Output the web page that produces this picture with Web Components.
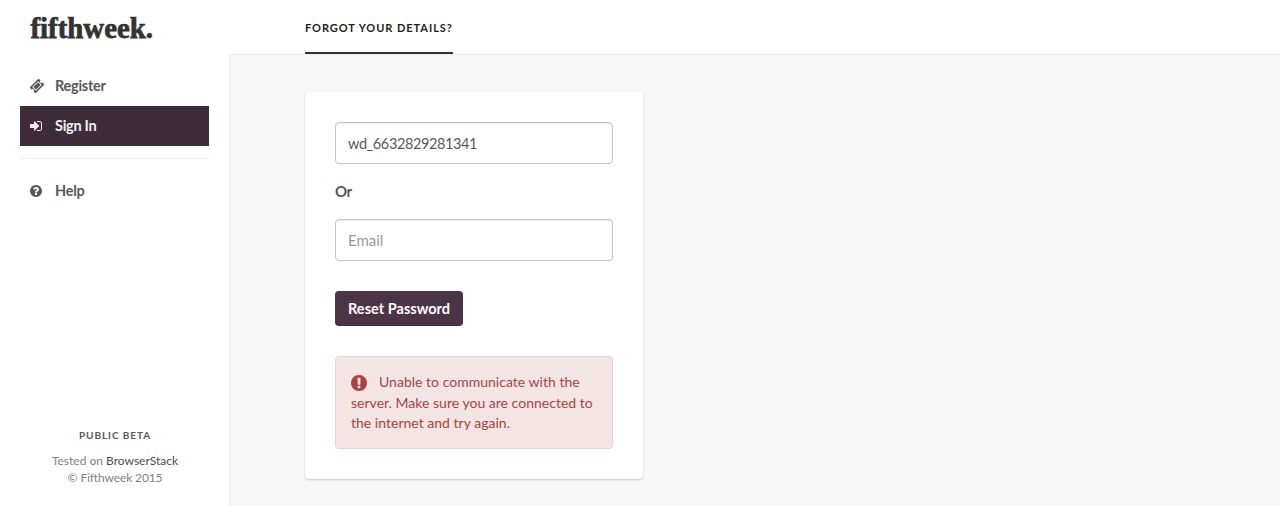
<!DOCTYPE html>
<html lang="en">
<head>
<meta charset="utf-8">
<title>Fifthweek</title>
<style>
html, body { margin: 0; height: 100%; }
body { font-family: Lato, sans-serif; font-size: 15px; line-height: 20px; color: #58595b; background: #fff; overflow: hidden; }
</style>
</head>
<body>
<fw-shell>
  <fw-sidebar slot="side">
    <fw-nav-item icon="ticket">Register</fw-nav-item>
    <fw-nav-item icon="sign-in" active>Sign In</fw-nav-item>
    <fw-divider></fw-divider>
    <fw-nav-item icon="question">Help</fw-nav-item>
  </fw-sidebar>
  <fw-tab slot="tabs">Forgot your details?</fw-tab>
  <fw-panel>
    <fw-field value="wd_6632829281341" label="Username"></fw-field>
    <fw-or>Or</fw-or>
    <fw-field placeholder="Email" label="Email"></fw-field>
    <fw-button>Reset Password</fw-button>
    <fw-alert>Unable to communicate with the server. Make sure you are connected to the internet and try again.</fw-alert>
  </fw-panel>
</fw-shell>
<script>
const ICONS = {
  'ticket': 'M1024 452l316 316-572 572-316-316zm-211 979l618-618q19-19 19-45t-19-45l-362-362q-18-18-45-18t-45 18l-618 618q-19 19-19 45t19 45l362 362q18 18 45 18t45-18zm889-637l-907 908q-37 37-90.5 37t-90.5-37l-126-126q56-56 56-136t-56-136-136-56-136 56l-125-126q-37-37-37-90.5t37-90.5l907-906q37-37 90.5-37t90.5 37l125 125q-56 56-56 136t56 136 136 56 136-56l126 125q37 37 37 90.5t-37 90.5z',
  'sign-in': 'M1312 896q0 26-19 45l-544 544q-19 19-45 19t-45-19-19-45v-288h-448q-26 0-45-19t-19-45v-384q0-26 19-45t45-19h448v-288q0-26 19-45t45-19 45 19l544 544q19 19 19 45zm352-352v704q0 119-84.5 203.5t-203.5 84.5h-320q-13 0-22.5-9.5t-9.5-22.5q0-4-1-20t-.5-26.5 3-23.5 10-19.5 20.5-6.5h320q66 0 113-47t47-113v-704q0-66-47-113t-113-47h-312l-11.5-1-11.5-3-8-5.5-7-9-2-13.5q0-4-1-20t-.5-26.5 3-23.5 10-19.5 20.5-6.5h320q119 0 203.5 84.5t84.5 203.5z',
  'question': 'M1024 1376v-192q0-14-9-23t-23-9h-192q-14 0-23 9t-9 23v192q0 14 9 23t23 9h192q14 0 23-9t9-23zm256-672q0-88-55.5-163t-138.5-116-170-41q-243 0-371 213-15 24 8 42l132 100q7 6 19 6 16 0 25-12 53-68 86-92 34-24 86-24 48 0 85.5 26t37.5 59q0 38-20 61t-68 45q-63 28-115.5 86.5t-52.5 125.5v36q0 14 9 23t23 9h192q14 0 23-9t9-23q0-19 21.5-49.5t54.5-49.5q32-18 49-28.5t46-35 44.5-48 28-60.5 12.5-81zm384 192q0 209-103 385.5t-279.5 279.5-385.5 103-385.5-103-279.5-279.5-103-385.5 103-385.5 279.5-279.5 385.5-103 385.5 103 279.5 279.5 103 385.5z',
  'exclamation': 'M896 128q209 0 385.5 103t279.5 279.5 103 385.5-103 385.5-279.5 279.5-385.5 103-385.5-103-279.5-279.5-103-385.5 103-385.5 279.5-279.5 385.5-103zm128 1247v-190q0-14-9-23.5t-22-9.5h-192q-13 0-23 10t-10 23v190q0 13 10 23t23 10h192q13 0 22-9.5t9-23.5zm-2-344l18-621q0-12-10-18-10-8-24-8h-220q-14 0-24 8-10 6-10 18l17 621q0 10 10 17.5t24 7.5h185q14 0 23.5-7.5t10.5-17.5z'
};
const BOXES = { 'ticket': '53 53 1686 1686', 'sign-in': '128 0 1792 1792', 'question': '128 0 1792 1792', 'exclamation': '128 128 1536 1536' };
function define(name, render) {
  customElements.define(name, class extends HTMLElement {
    constructor() { super(); this.attachShadow({ mode: 'open' }); }
    connectedCallback() { this.shadowRoot.innerHTML = render(this); }
  });
}
define('fw-icon', el => `<style>:host{display:inline-block;width:14px;height:14px}svg{display:block;width:100%;height:100%;fill:currentColor}</style>
<svg viewBox="${BOXES[el.getAttribute('name')]}"><path d="${ICONS[el.getAttribute('name')]}"/></svg>`);

define('fw-logo', () => `<style>:host{display:block;height:66px}svg{display:block;overflow:visible}text{font:bold 30px "Liberation Serif",serif;font-variant-ligatures:none;fill:#333;stroke:#333;stroke-width:.75px}</style>
<svg width="189" height="66"><text x="10.5" y="38" textLength="122.5" lengthAdjust="spacingAndGlyphs">fifthweek.</text></svg>`);

define('fw-nav-item', el => `<style>
:host{display:flex;align-items:center;height:40px;padding:0 10px;font-weight:700;font-size:14.5px;letter-spacing:-.27px;color:#58595b}
:host([active]){background:#3f2c3a;color:#f3f0f2}
fw-icon{margin-right:11px}span{padding-bottom:1px}</style>
<fw-icon name="${el.getAttribute('icon')}"></fw-icon><span><slot></slot></span>`);

define('fw-divider', () => `<style>:host{display:block;height:1px;background:#f3eeee;margin:12px 0}</style>`);

define('fw-sidebar', () => `<style>
:host{display:flex;flex-direction:column;width:229px;height:100%;padding:0 20px;box-sizing:border-box}
footer{margin-top:auto;text-align:center;padding:0 0 20px 1px;font-size:12px;line-height:17px;color:#808285}
strong{display:block;font-size:10px;line-height:16px;letter-spacing:.92px;color:#58595b;margin-bottom:9px}
a{color:#4c4c4e}.copy{letter-spacing:-.13px}</style>
<fw-logo></fw-logo><nav><slot></slot></nav>
<footer><strong>PUBLIC BETA</strong><div>Tested on <a>BrowserStack</a></div><div class="copy">© Fifthweek 2015</div></footer>`);

define('fw-tab', () => `<style>:host{display:block;box-sizing:border-box;height:54px;border-bottom:2px solid #3f2c3a;font-size:11px;font-weight:700;line-height:56px;letter-spacing:.95px;text-transform:uppercase;color:#231f20;white-space:nowrap}</style><slot></slot>`);

define('fw-shell', () => `<style>
:host{display:flex;height:506px}
.main{flex:1;display:flex;flex-direction:column}
header{display:flex;height:54px;padding-left:76px}
main{flex:1;background:#f7f7f7;border:1px solid #ebebeb;border-width:1px 0 0 1px;border-top-left-radius:2px;padding:37px 0 0 75px}</style>
<slot name="side"></slot><div class="main"><header><slot name="tabs"></slot></header><main><slot></slot></main></div>`);

define('fw-panel', () => `<style>:host{display:block;box-sizing:border-box;width:338px;height:387px;padding:30px;background:#fff;border-radius:4px;box-shadow:0 1px 2px rgba(0,0,0,.2)}</style><slot></slot>`);

define('fw-field', el => `<style>:host{display:block}
input{display:block;box-sizing:border-box;width:100%;height:42px;padding:0 12px;border:1px solid #c6c6ca;border-radius:4px;box-shadow:inset 0 1px 1px rgba(0,0,0,.075);font:inherit;font-size:14.5px;letter-spacing:-.4px;color:#58595b;background:#fff;outline:0}
input::placeholder{font-size:15px;color:#999;opacity:1;letter-spacing:0}</style>
<input type="text" aria-label="${el.getAttribute('label')}" value="${el.getAttribute('value') || ''}" placeholder="${el.getAttribute('placeholder') || ''}">`);

define('fw-or', () => `<style>:host{display:block;font-weight:700;font-size:15px;letter-spacing:-.5px;line-height:21px;padding:17px 0}</style><slot></slot>`);

define('fw-button', () => `<style>:host{display:block;margin:30px 0}
button{display:block;height:35px;width:128px;padding:0 13px;border:0;border-radius:4px;background:#4b3446;color:#fff;font:700 14.5px/35px Lato,sans-serif;letter-spacing:.03px;text-align:left;white-space:nowrap;box-shadow:inset 0 -1px 1px rgba(0,0,0,.12)}</style><button><slot></slot></button>`);

define('fw-alert', () => `<style>:host{display:block;box-sizing:border-box;height:93px;padding:15px;border:1px solid #ebd1d5;border-radius:4px;background:#f2e5e4;color:#a94442;font-size:14px;letter-spacing:.015px;line-height:20.5px}
fw-icon{width:16px;height:16px;margin-right:12px;vertical-align:-3.5px}</style><fw-icon name="exclamation"></fw-icon><slot></slot>`);
</script>
</body>
</html>
